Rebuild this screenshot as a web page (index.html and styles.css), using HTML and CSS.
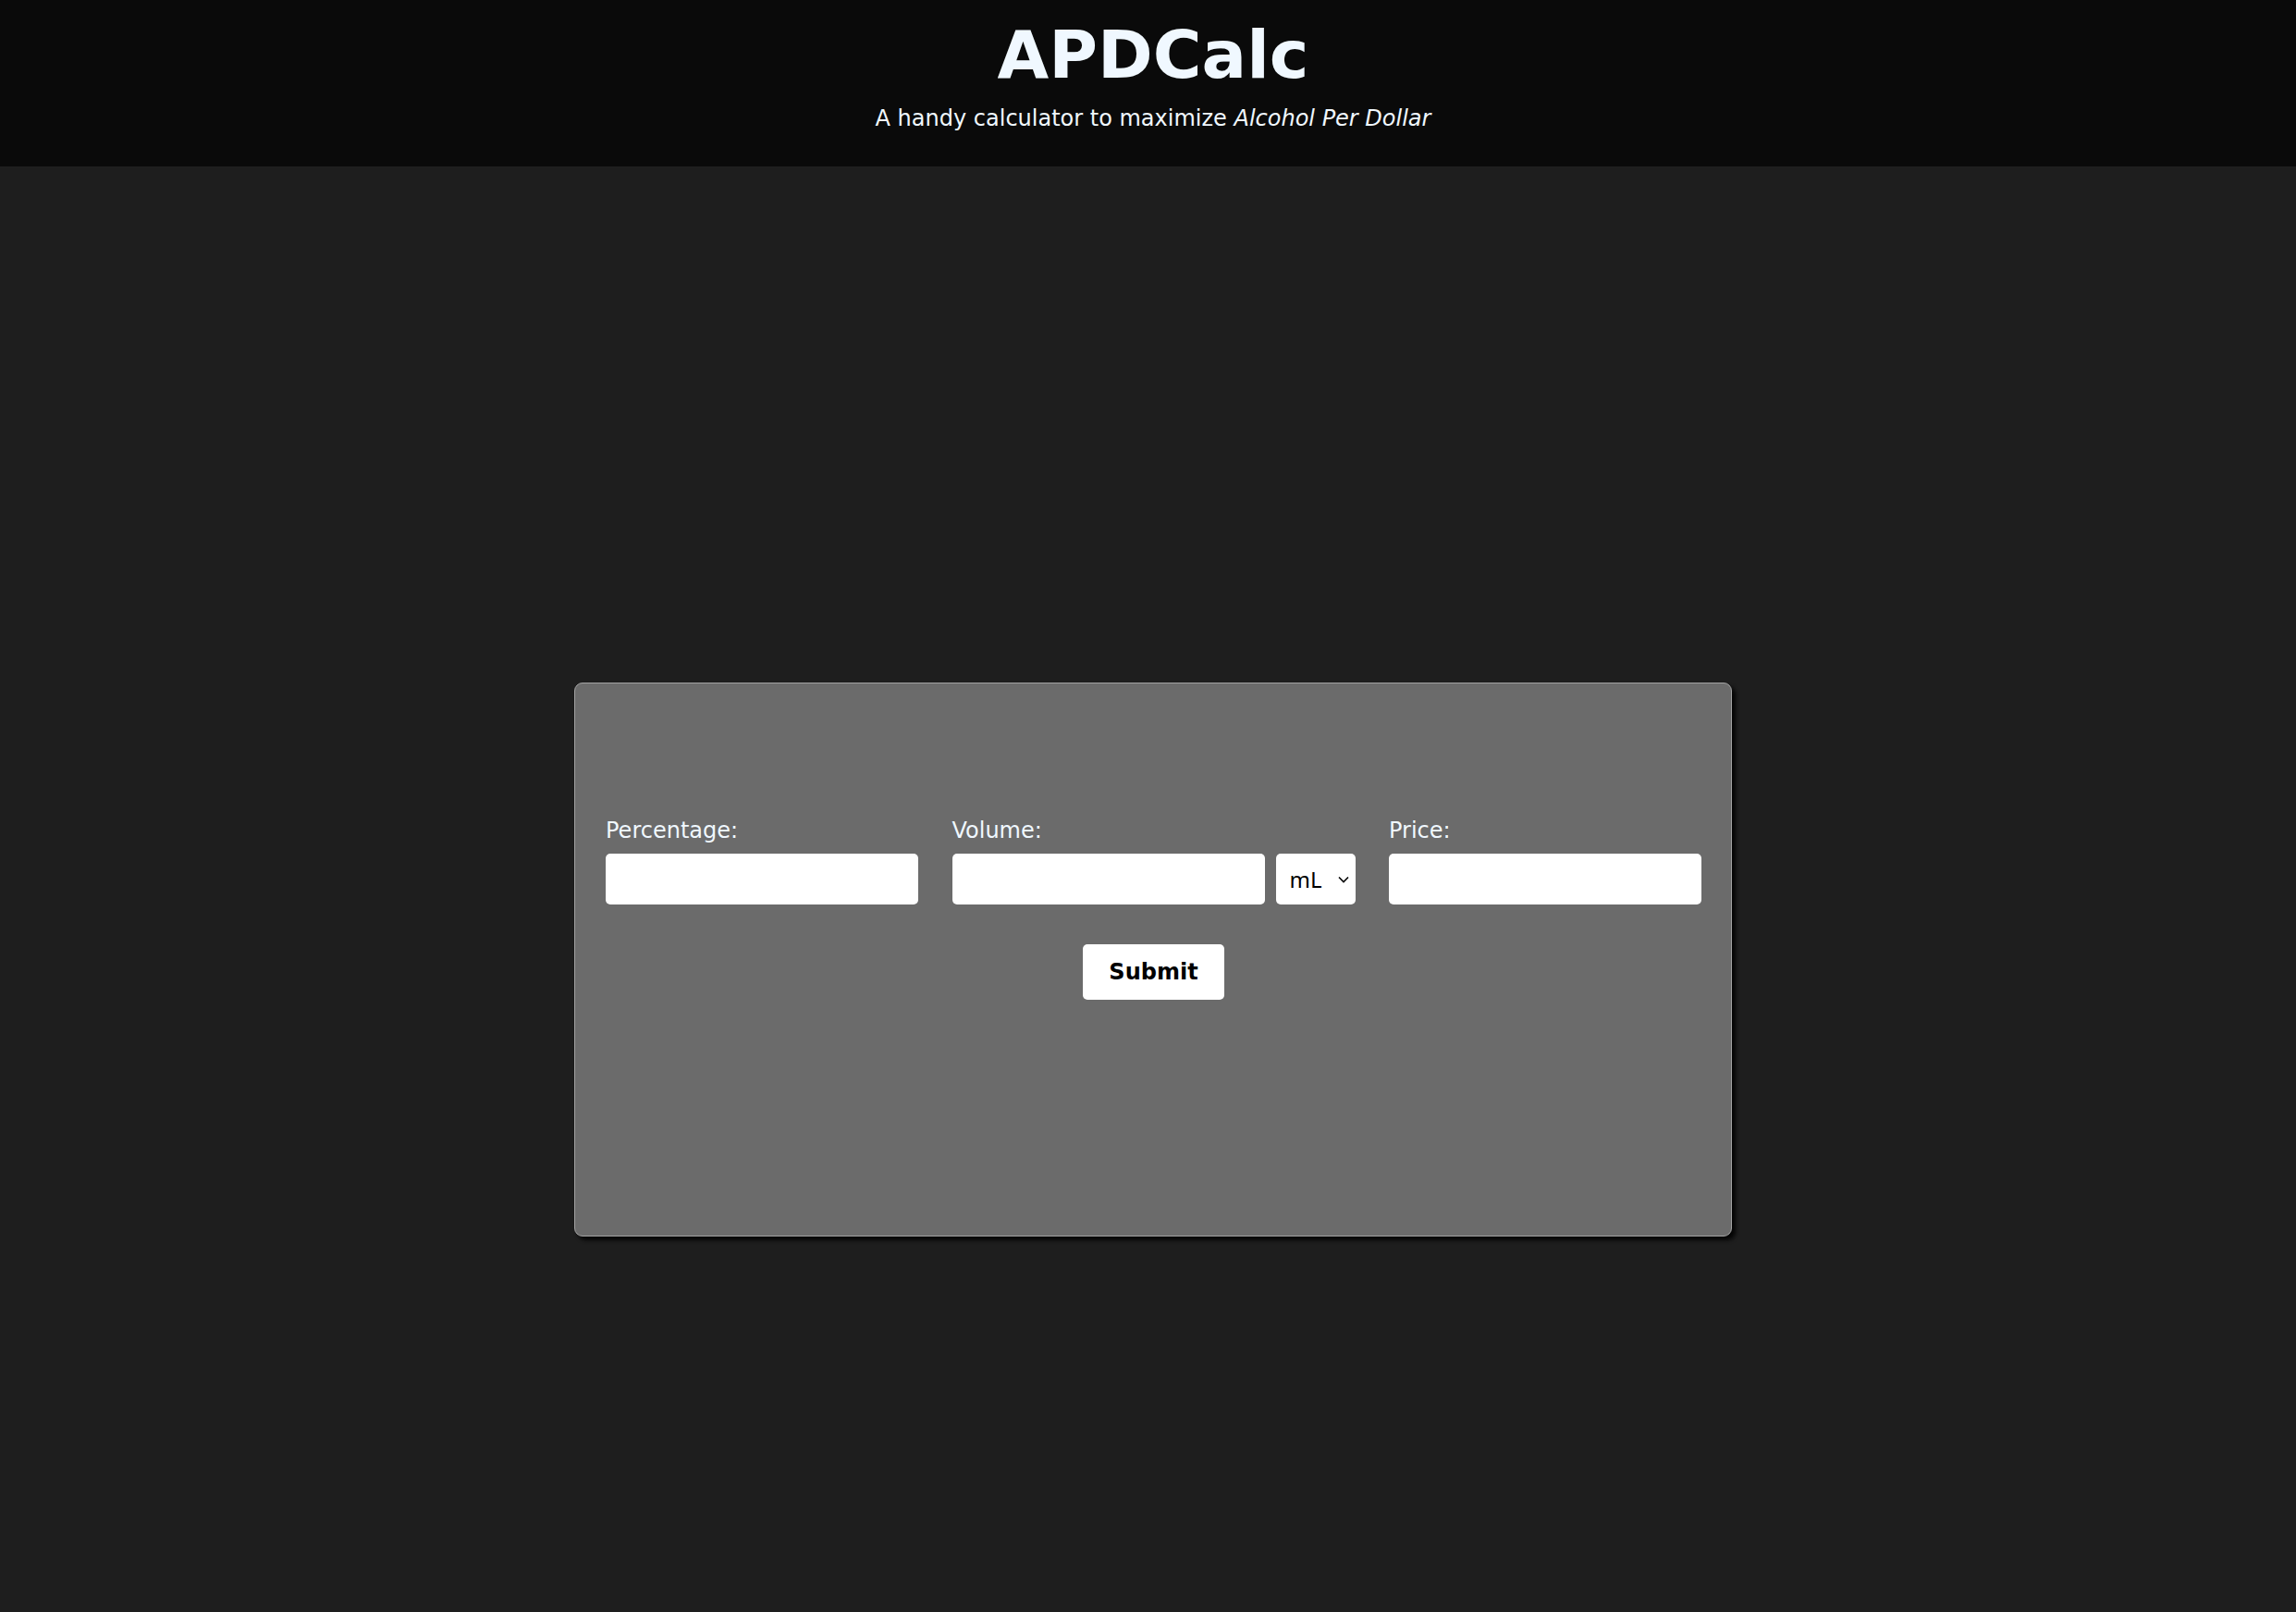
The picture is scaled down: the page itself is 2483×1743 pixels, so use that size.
FILE: index.html
```html
<!DOCTYPE html>
<html lang="en">

<head>
    <meta charset="UTF-8">
    <title>APDCalc</title>
    <meta name="description" content="A handy calculator to maximize Alcohol Per Dollar">
    <link rel="stylesheet" href="styles.css">
</head>

<body>
    <header class="header">
        <h1 class="title">APDCalc</h1>
        <p class="subtitle">A handy calculator to maximize <em>Alcohol Per Dollar</em></p>
    </header>

    <main class="main">
        <form class="calc" onsubmit="return false">
            <div class="fields">
                <div class="field">
                    <label class="label" for="percentage">Percentage:</label>
                    <input class="input" type="text" id="percentage">
                </div>

                <div class="field">
                    <label class="label" for="volume">Volume:</label>
                    <div class="field-row">
                        <input class="input" type="text" id="volume">
                        <div class="unit-wrap">
                            <select class="unit" id="unit">
                                <option>mL</option>
                                <option>L</option>
                                <option>oz</option>
                            </select>
                            <!-- chevron drawn over the select -->
                            <svg class="unit-arrow" width="12" height="8" viewBox="0 0 12 8">
                                <path d="M1 1.5 L6 6.5 L11 1.5" fill="none" stroke="#000" stroke-width="1.6"/>
                            </svg>
                        </div>
                    </div>
                </div>

                <div class="field">
                    <label class="label" for="price">Price:</label>
                    <input class="input" type="text" id="price">
                </div>
            </div>

            <button class="submit" type="submit">Submit</button>
        </form>
    </main>
</body>

</html>
```

FILE: styles.css
```css
* {
    padding: 0px;
    margin: 0px;
    box-sizing: border-box;
}

body {
    background: #1e1e1e;
    color: aliceblue;
    font-family: "DejaVu Sans", Verdana, sans-serif;
    min-height: 100vh;
}

.header {
    background: #0a0a0a;
    text-align: center;
    padding: 17px 0 38px 11px;
    border-bottom: 1px solid #202020;
}

.title {
    font-size: 72px;
    font-weight: bold;
    line-height: normal;
    margin-bottom: 13px;
}

.subtitle {
    font-size: 24px;
}

.main {
    display: flex;
    justify-content: center;
    padding: 557px 0 0 11px;
}

.calc {
    width: 1252px;
    height: 599px;
    background: #6b6b6b;
    border: 1px solid #a3a3a3;
    border-radius: 9px;
    box-shadow: 4px 4px 4px #050505;
    padding: 145px 32px 0 33px;
    display: flex;
    flex-direction: column;
    align-items: center;
}

.fields {
    width: 100%;
    display: flex;
    justify-content: space-between;
}

.field {
    display: flex;
    flex-direction: column;
}

.field-row {
    display: flex;
    gap: 12px;
}

.label {
    font-size: 24px;
    margin-bottom: 11px;
}

.input {
    width: 338px;
    height: 55px;
    border: none;
    border-radius: 5px;
    background: #fff;
    font-family: inherit;
    font-size: 22px;
    padding: 0 10px;
}

.unit-wrap {
    position: relative;
}

.unit {
    -webkit-appearance: none;
    appearance: none;
    width: 86px;
    height: 55px;
    border: none;
    border-radius: 5px;
    background: #fff;
    color: #000;
    font-family: "Noto Sans", sans-serif;
    font-size: 24px;
    padding: 0 0 0 15px;
}

.unit-arrow {
    position: absolute;
    right: 7px;
    top: 24px;
    pointer-events: none;
}

.submit {
    margin-top: 43px;
    width: 153px;
    height: 60px;
    border: none;
    border-radius: 5px;
    background: #fff;
    color: #000;
    font-family: inherit;
    font-size: 24px;
    font-weight: bold;
    cursor: pointer;
}
```
